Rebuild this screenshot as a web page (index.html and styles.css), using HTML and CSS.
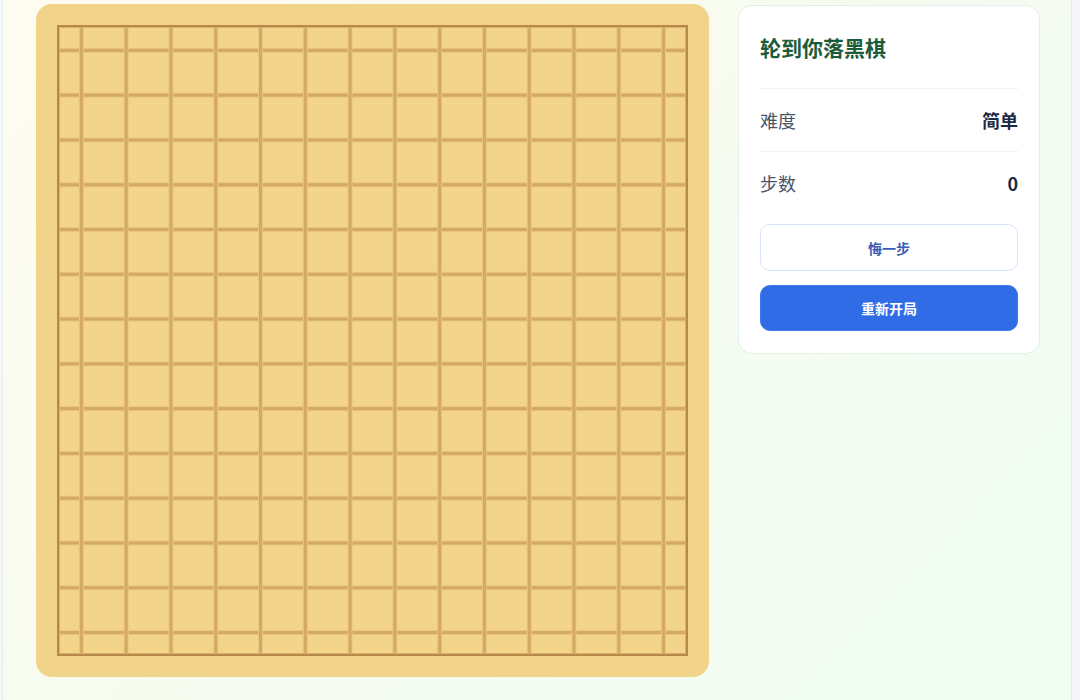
FILE: index.html
```html
<!DOCTYPE html>
<html lang="zh">
<head>
<meta charset="utf-8">
<title>五子棋</title>
<link rel="stylesheet" href="styles.css">
</head>
<body>
<div class="frame">
  <div class="board-wrap">
    <div class="board"></div>
  </div>
  <aside class="panel">
    <div class="title">轮到你落黑棋</div>
    <div class="row"><span class="label">难度</span><span class="value">简单</span></div>
    <div class="row last"><span class="label">步数</span><span class="value">0</span></div>
    <div class="actions">
      <button class="btn btn-ghost">悔一步</button>
      <button class="btn btn-primary">重新开局</button>
    </div>
  </aside>
</div>
</body>
</html>
```
FILE: styles.css
```css
html, body {
  margin: 0;
  padding: 0;
  background: #f6f6fb;
  font-family: "Noto Sans CJK SC", "Noto Sans", sans-serif;
}
.frame {
  box-sizing: border-box;
  margin-left: 2px;
  width: 1070px;
  height: 700px;
  border-left: 1px solid #e2efe8;
  border-right: 1px solid #e2efe8;
  background: linear-gradient(135deg, #fefcf1 0%, #f7fbf0 45%, #effdf3 100%);
  display: flex;
  align-items: flex-start;
  gap: 29px;
  padding: 4px 0 0 33px;
}
.board-wrap {
  box-sizing: border-box;
  width: 673px;
  height: 673px;
  padding: 21px;
  background: #f2d38a;
  border-radius: 16px;
  flex: none;
}
.board {
  box-sizing: border-box;
  width: 631px;
  height: 631px;
  border: 2px solid #b7884a;
  background-color: #f3d48b;
  background-image:
    linear-gradient(to right,
      transparent calc(50% - 2px),
      #e8c580 calc(50% - 2px),
      #e8c580 calc(50% - 1px),
      #d4a961 calc(50% - 1px),
      #d4a961 calc(50% + 1px),
      #e8c580 calc(50% + 1px),
      #e8c580 calc(50% + 2px),
      transparent calc(50% + 2px)),
    linear-gradient(to bottom,
      transparent calc(50% - 2px),
      #e8c580 calc(50% - 2px),
      #e8c580 calc(50% - 1px),
      #d4a961 calc(50% - 1px),
      #d4a961 calc(50% + 1px),
      #e8c580 calc(50% + 1px),
      #e8c580 calc(50% + 2px),
      transparent calc(50% + 2px));
  background-size: calc(100% / 14) 100%, 100% calc(100% / 14);
  background-position: 0 0, 0 1px;
  background-repeat: repeat-x, repeat-y;
  box-shadow: inset 0 0 0 1px #dab06c;
}
.panel {
  box-sizing: border-box;
  width: 302px;
  margin-top: 1px;
  padding: 22px 21px 22px 21px;
  background: #ffffff;
  border: 1px solid #e3efe7;
  border-radius: 14px;
  flex: none;
}
.title {
  font-size: 21px;
  font-weight: 700;
  color: #1d5c38;
  line-height: 38px;
  padding-bottom: 22px;
  border-bottom: 1px solid #eef2f1;
}
.row {
  display: flex;
  justify-content: space-between;
  align-items: center;
  height: 62px;
  border-bottom: 1px solid #eef2f1;
  font-size: 18px;
}
.row.last {
  border-bottom: none;
}
.label {
  color: #475467;
}
.value {
  color: #1b2a44;
  font-weight: 700;
}
.actions {
  display: flex;
  flex-direction: column;
  gap: 14px;
  margin-top: 10px;
}
.btn {
  font-family: inherit;
  font-size: 14px;
  font-weight: 700;
  border-radius: 10px;
  cursor: pointer;
  width: 100%;
}
.btn-ghost {
  height: 47px;
  background: #ffffff;
  border: 1.5px solid #d7e4fc;
  color: #3a5db8;
}
.btn-primary {
  height: 46px;
  background: #2f6ce5;
  border: 1px solid #3d78ea;
  color: #ffffff;
}
```
